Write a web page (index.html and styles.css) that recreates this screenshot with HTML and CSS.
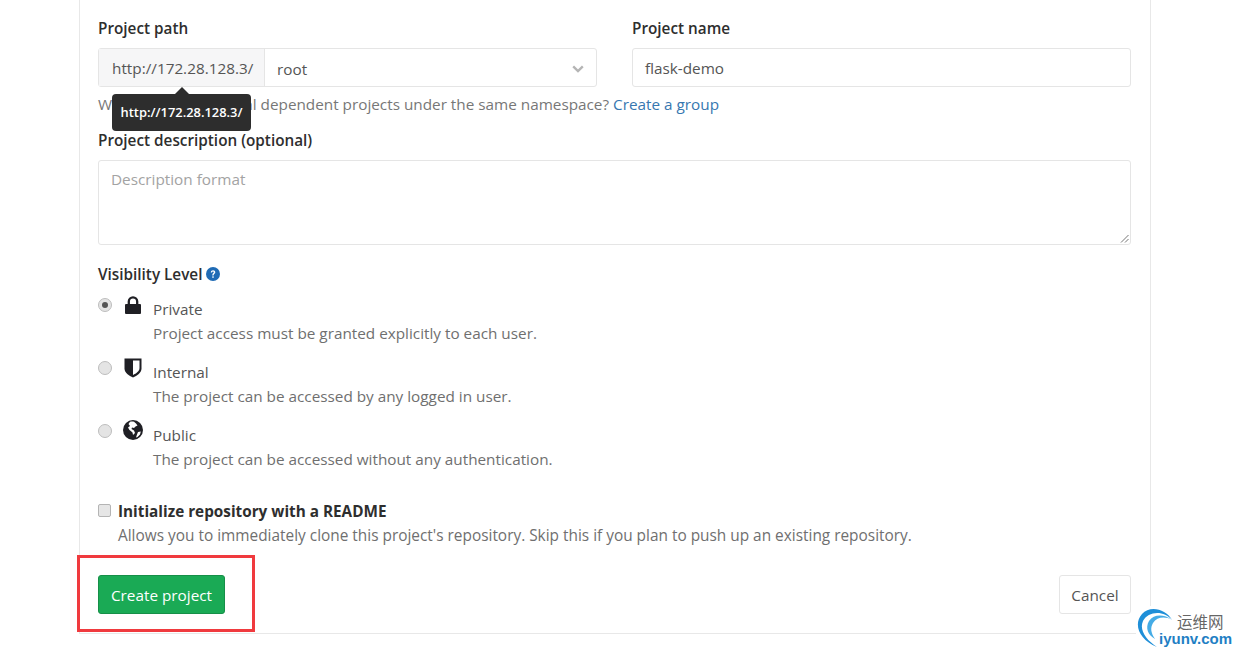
FILE: index.html
```html
<!DOCTYPE html>
<html lang="en">
<head>
<meta charset="utf-8">
<title>New project</title>
<link rel="stylesheet" href="styles.css">
</head>
<body>
<main class="panel">
  <div class="path-row">
    <div class="field">
      <label class="label">Project path</label>
      <div class="group">
        <span class="addon">http://172.28.128.3/</span>
        <div class="select">
          <span>root</span>
          <svg class="chev" width="12" height="8" viewBox="0 0 12 8"><path d="M1.2 1.4 6 6l4.800-4.600" fill="none" stroke="#b5b5b5" stroke-width="2.400"/></svg>
        </div>
      </div>
    </div>
    <div class="field">
      <label class="label">Project name</label>
      <div class="input">flask-demo</div>
    </div>
  </div>
  <p class="help">Want to house several dependent projects under the same namespace? <a class="link">Create a group</a></p>
  <label class="label desc-label">Project description (optional)</label>
  <div class="textarea">
    <span class="placeholder">Description format</span>
    <svg class="grip" width="9" height="9" viewBox="0 0 9 9"><path d="M8.500 1 1 8.500M8.500 5 5 8.500" stroke="#777" stroke-width="1"/></svg>
  </div>
  <div class="label vis-label">Visibility Level
    <svg class="help-ic" width="14" height="14" viewBox="0 0 14 14"><circle cx="7" cy="7" r="7" fill="#1f6bb5"/><path d="M4.800 5.400c.1-1.400 1-2.100 2.300-2.100 1.300 0 2.200.8 2.200 1.900 0 1.700-1.700 1.500-1.700 3v.2H6.300v-.4c0-1.800 1.500-1.700 1.500-2.700 0-.5-.3-.8-.8-.8-.6 0-.9.400-1 1z" fill="#fff"/><rect x="6.300" y="9.300" width="1.400" height="1.500" fill="#fff"/></svg>
  </div>
  <ul class="vis-list">
    <li class="vis">
      <span class="radio checked"></span>
      <svg class="vis-ic" width="16" height="19" viewBox="0 0 16 19"><path d="M1 8h14a1 1 0 0 1 1 1v8a1 1 0 0 1-1 1H1a1 1 0 0 1-1-1V9a1 1 0 0 1 1-1z" fill="#1f1f24"/><path d="M3.800 9V5.500a4.200 4.200 0 0 1 8.400 0V9" fill="none" stroke="#1f1f24" stroke-width="2.300"/></svg>
      <div class="vis-text"><div class="vis-name">Private</div><div class="vis-desc">Project access must be granted explicitly to each user.</div></div>
    </li>
    <li class="vis">
      <span class="radio"></span>
      <svg class="vis-ic" width="18" height="20" viewBox="0 0 18 20"><path d="M.5 .5h17v10c0 4.500-4.500 7-8.500 9-4-2-8.500-4.500-8.500-9z" fill="#1f1f24"/><path d="M9 2.400h6.500V10c0 3.200-3.300 5.300-6.500 7z" fill="#fff"/></svg>
      <div class="vis-text"><div class="vis-name">Internal</div><div class="vis-desc">The project can be accessed by any logged in user.</div></div>
    </li>
    <li class="vis">
      <span class="radio"></span>
      <svg class="vis-ic" width="20" height="20" viewBox="0 0 20 20"><circle cx="10" cy="10" r="10" fill="#1f1f24"/><path d="M7 1.800c1.500-.5 3-.4 4 0L13 3.500l1.500 2-2 1-1.500 1.500-2-.5-.5 1.500 2.500 1.500 1 2.500-2 2-.5-2.500L6.500 10 5 7.500 7 6 5.500 4zM15 12l2.800-.5-.8 3-2.500 2.500-1.500.5 1-3z" fill="#fff"/></svg>
      <div class="vis-text"><div class="vis-name">Public</div><div class="vis-desc">The project can be accessed without any authentication.</div></div>
    </li>
  </ul>
  <div class="readme">
    <span class="checkbox"></span>
    <div>
      <div class="readme-title">Initialize repository with a README</div>
      <div class="vis-desc readme-desc">Allows you to immediately clone this project's repository. Skip this if you plan to push up an existing repository.</div>
    </div>
  </div>
  <div class="actions">
    <button class="btn btn-create">Create project</button>
    <button class="btn btn-cancel">Cancel</button>
  </div>
</main>
<div class="tooltip"><span class="tip-arrow"></span>http://172.28.128.3/</div>
<div class="highlight"></div>
<div class="wm">
  <svg class="wm-ic" width="40" height="44" viewBox="0 0 40 44"><path d="M36 14C30 3 14-1 6 8-3 18 3 34 21 41 10 34 3 24 7 15c5-10 21-11 29-1z" fill="#1f8fd8"/><path d="M36 14C28 8 18 8 13 15c-4 7-1 14 6 18-4-6-5-11-2-16 4-6 12-7 19-3z" fill="#45ace6"/></svg>
  <span class="wm-cn">运维网</span>
  <span class="wm-en">iyunv.com</span>
</div>
</body>
</html>
```
FILE: styles.css
```css
* { box-sizing: border-box; }
html, body { margin: 0; padding: 0; background: #fff; }
body {
  width: 1240px;
  height: 655px;
  overflow: hidden;
  position: relative;
  font-family: "Open Sans", "Noto Sans", sans-serif;
  font-size: 15.3px;
  color: #555;
}
.panel {
  margin-left: 79px;
  width: 1072px;
  height: 634px;
  border: 1px solid #e8e8e8;
  border-top: 0;
  padding: 17px 19px 0 18px;
  display: flex;
  flex-direction: column;
}
.path-row { display: grid; grid-template-columns: 499px 499px; column-gap: 35px; }
.label { font-weight: 600; color: #2e2e2e; line-height: 22px; display: block; }
.field .label { margin-bottom: 9px; }
.group { display: flex; height: 39px; border: 1px solid #e5e5e5; border-radius: 3px; }
.addon { width: 166px; flex: none; background: #f6f6f7; border-right: 1px solid #e5e5e5; padding-left: 13px; line-height: 39px; color: #555; white-space: nowrap; }
.select { flex: 1; display: flex; justify-content: space-between; align-items: center; padding: 2px 12px 0; }
.input { height: 39px; border: 1px solid #e5e5e5; border-radius: 3px; padding: 1px 12px 0; line-height: 37px; }
.help { margin: 6px 0 0; line-height: 22px; color: #777; white-space: nowrap; }
.link { color: #3777b0; }
.desc-label { margin-top: 14px; }
.textarea { position: relative; height: 85px; margin-top: 9px; border: 1px solid #e5e5e5; border-radius: 3px; padding: 7px 12px; line-height: 22px; }
.placeholder { color: #a3a3a3; }
.grip { position: absolute; right: 1px; bottom: 1px; }
.vis-label { margin-top: 18px; display: flex; align-items: center; gap: 4px; }
.vis-list { list-style: none; margin: 11px 0 0; padding: 0; display: flex; flex-direction: column; gap: 14px; }
.vis { display: flex; line-height: 24px; position: relative; }
.vis-text { padding-top: 1px; }
.radio { width: 14px; height: 14px; flex: none; margin-top: 2px; border-radius: 50%; background: #e4e4e4; border: 1px solid #bdbdbd; position: relative; }
.radio.checked::after { content: ""; position: absolute; left: 3px; top: 3px; width: 6px; height: 6px; border-radius: 50%; background: #555; }
.vis-ic { flex: none; }
.vis:nth-child(1) .vis-ic { margin: 0 12px 0 13px; }
.vis:nth-child(2) .vis-ic { margin: -1px 11px 0 12px; }
.vis:nth-child(3) .vis-ic { margin: -2px 10px 0 11px; }
.vis-name { color: #555; }
.vis-desc { color: #6f6f6f; white-space: nowrap; line-height: 24px; }
.readme-desc { font-size: 15.4px; }
.readme { display: flex; margin-top: 28px; }
.checkbox { width: 13px; height: 13px; flex: none; margin: 5px 7px 0 0; border: 1px solid #b4b4b4; border-radius: 2px; background: #e6e6e6; }
.readme-title { font-weight: 700; color: #2e2e2e; line-height: 25px; }
.actions { display: flex; justify-content: space-between; margin-top: 27px; }
.btn { font: inherit; height: 39px; border-radius: 3px; line-height: 1; padding: 2px 0 0; }
.btn-create { width: 127px; background: #1aaa55; border: 1px solid #168f48; color: #fff; }
.btn-cancel { width: 72px; background: #fff; border: 1px solid #e5e5e5; color: #555; }
.tooltip { position: absolute; left: 112px; top: 94px; width: 139px; height: 37px; background: #2d2d2d; color: #fff; border-radius: 4px; font-size: 12.9px; font-weight: 600; line-height: 37px; text-align: center; white-space: nowrap; }
.tip-arrow { position: absolute; left: 63px; top: -7px; border: 7px solid transparent; border-top: 0; border-bottom-color: #2d2d2d; }
.highlight { position: absolute; left: 77px; top: 555px; width: 178px; height: 77px; border: 3px solid #f03a3e; }
.wm { position: absolute; left: 1136px; top: 606px; width: 104px; height: 49px; background: #fff; }
.wm-ic { position: absolute; left: 0; top: 0; }
.wm-cn { position: absolute; left: 41px; top: 5px; font: 15.500px/20px "Noto Sans CJK SC", sans-serif; color: #666; white-space: nowrap; }
.wm-en { position: absolute; left: 23px; top: 23px; font: 700 15px/20px "Liberation Sans", sans-serif; color: #1f7fc4; white-space: nowrap; }
```
